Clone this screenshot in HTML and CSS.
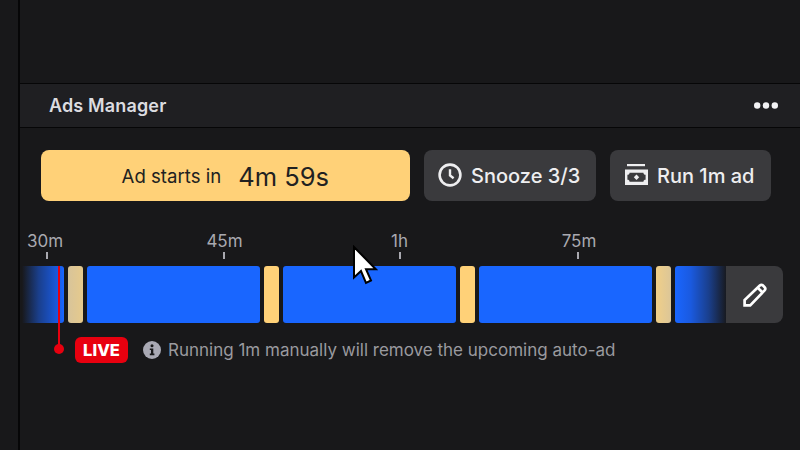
FILE: index.html
```html
<!DOCTYPE html>
<html lang="en">
<head>
<meta charset="utf-8">
<title>Ads Manager</title>
<link rel="stylesheet" href="styles.css">
</head>
<body>
<div class="app">
  <aside class="rail"></aside>
  <main class="main">
    <div class="top"></div>
    <header class="head">
      <h1 class="title">Ads Manager</h1>
      <svg class="more" width="24" height="7" viewBox="0 0 24 7"><circle cx="3.2" cy="3.5" r="3.2"/><circle cx="12" cy="3.5" r="3.2"/><circle cx="20.8" cy="3.5" r="3.2"/></svg>
    </header>
    <section class="panel">
      <div class="actions">
        <div class="countdown"><span class="cd-label">Ad starts in</span><span class="cd-time">4m 59s</span></div>
        <button class="btn btn-snooze">
          <svg width="24" height="24" viewBox="0 0 24 24" fill="none" stroke="currentColor"><circle cx="12" cy="12" r="10.4" stroke-width="2.6"/><path d="M12 6.2V12.4L15.6 15.2" stroke-width="2.4"/></svg>
          <span>Snooze 3/3</span>
        </button>
        <button class="btn btn-run">
          <svg width="24" height="22" viewBox="0 0 24 22"><path fill="currentColor" d="M3 0H21V2.2H3Z"/><path fill="currentColor" fill-rule="evenodd" d="M1 5.5H24V21H1ZM3.4 10.8V15.8C4.8 15.8 5.4 16.4 5.6 17.8H19.4C19.6 16.4 20.2 15.8 21.6 15.8V10.8C20.2 10.8 19.6 10.2 19.4 8.8H5.6C5.4 10.2 4.8 10.8 3.4 10.8Z"/><path fill="currentColor" d="M12.5 10.6L15.2 13.3L12.5 16L9.8 13.3Z"/></svg>
          <span>Run 1m ad</span>
        </button>
      </div>
      <div class="timeline">
        <div class="scale">
          <div class="mark mark-a"><span>30m</span><i></i></div>
          <div class="mark mark-b"><span>45m</span><i></i></div>
          <div class="mark mark-c"><span>1h</span><i></i></div>
          <div class="mark mark-d"><span>75m</span><i></i></div>
        </div>
        <div class="track">
          <div class="seg blue fade-l"></div>
          <div class="seg gold dim-l"></div>
          <div class="seg blue wide"></div>
          <div class="seg gold"></div>
          <div class="seg blue wide"></div>
          <div class="seg gold"></div>
          <div class="seg blue wide"></div>
          <div class="seg gold dim-r"></div>
          <div class="seg blue fade-r"></div>
          <button class="edit">
            <svg width="24" height="24" viewBox="0 0 24 24" fill="none" stroke="#fff" stroke-width="2.7" stroke-linejoin="miter"><path d="M1.6 22.4V17L16.8 2.6C17.8 1.7 19 1.7 20 2.6L21.6 4.2C22.5 5.2 22.5 6.4 21.6 7.4L7.2 22.4Z"/><path d="M15 5L19.3 9.2"/></svg>
          </button>
        </div>
        <div class="status">
          <span class="live">LIVE</span>
          <svg class="info" width="18" height="18" viewBox="0 0 18 18"><circle cx="9" cy="9" r="9" fill="#a9a9b4"/><circle cx="9" cy="4.8" r="1.5" fill="#18181a"/><path d="M6.8 7.4H10.3V12.6H11.4V14.2H6.8V12.6H8V9H6.8Z" fill="#18181a"/></svg>
          <span class="note">Running 1m manually will remove the upcoming auto-ad</span>
        </div>
        <div class="playhead"></div>
      </div>
    </section>
    <svg class="cursor" width="26" height="42" viewBox="0 0 26 42"><path d="M2 2V32.5L9 26L14 37.8L19 35.4L14 24.2H23.8Z" fill="#fff" stroke="#000" stroke-width="2"/></svg>
  </main>
</div>
</body>
</html>
```
FILE: styles.css
```css
* { box-sizing: border-box; }
html, body { margin: 0; height: 100%; overflow: hidden; }
body { background: #18181a; font-family: Inter, "Liberation Sans", sans-serif; color: #e8e8ea; }
.app { display: flex; height: 450px; }
.rail { width: 20px; flex: none; border-right: 2px solid #060607; background: #18181a; }
.main { position: relative; flex: 1; display: flex; flex-direction: column; }
.top { height: 83px; flex: none; }
.head { height: 45px; flex: none; display: flex; align-items: center; justify-content: space-between; padding: 0 22px 0 29px; background: #1f1f22; border-top: 1px solid #060607; border-bottom: 1px solid #060607; }
.title { margin: 0 0 1px; font-size: 18px; font-weight: 600; letter-spacing: .15px; color: #dcdce0; }
.more { fill: #f2f2f4; display: block; }
.panel { padding: 21.5px 17px 0 2px; display: flex; flex-direction: column; }
.actions { display: flex; gap: 14px; padding-left: 19px; height: 51.5px; }
.countdown { width: 368.5px; padding-top: 2px; border-radius: 8px; background: #ffd178; color: #212121; display: flex; align-items: center; justify-content: center; gap: 17px; }
.cd-label { font-size: 18.6px; }
.cd-time { font-size: 25.5px; }
.btn { height: 51.5px; border: 0; border-radius: 8px; background: #3a3a3d; color: #eeeef0; font: 500 20px Inter, "Liberation Sans", sans-serif; display: flex; align-items: center; gap: 9px; padding: 0; }
.btn span { padding-top: 2px; }
.btn-snooze { width: 172.5px; padding-left: 14.5px; }
.btn-run { width: 161px; padding-left: 14px; }
.timeline { position: relative; margin-top: 31px; }
.scale { position: relative; height: 34px; }
.mark { position: absolute; top: 0; width: 60px; display: flex; flex-direction: column; align-items: center; font-size: 17px; color: #a9a9b0; line-height: 18px; }
.mark i { width: 1.5px; height: 7px; background: #a9a9b0; margin-top: 2px; }
.mark-a { left: -7px; }
.mark-b { left: 172.5px; }
.mark-c { left: 347.5px; }
.mark-d { left: 527px; }
.mark-a i { margin-left: 4px; }
.mark-b i { margin-left: -1px; }
.mark-c i { margin-left: 1px; }
.mark-d i { margin-left: -2px; }
.track { display: flex; gap: 4px; height: 57px; margin-left: -0.5px; }
.seg { border-radius: 3px; flex: none; }
.blue { background: #1966ff; }
.gold { background: #ffd178; width: 15px; }
.dim-l { background: linear-gradient(90deg, #d8c49a, #e6ca8c); }
.dim-r { background: linear-gradient(90deg, #f0cf88, #dcc698); }
.wide { width: 173px; }
.fade-l { width: 42px; border-radius: 0 3px 3px 0; background: linear-gradient(90deg, #18181a 0%, #1a3f8c 40%, #1a5ae0 85%, #1966ff 100%); }
.fade-r { width: 52.5px; margin-right: -5px; border-radius: 3px 0 0 3px; background: linear-gradient(90deg, #1966ff 0%, #1a5ae0 30%, #1a3f8c 65%, #18181a 100%); }
.edit { width: 57px; height: 57px; flex: none; border: 0; padding: 0; background: #3a3a3d; border-radius: 0 8px 8px 0; display: flex; align-items: center; justify-content: center; position: relative; }
.status { display: flex; align-items: center; margin-top: 14px; padding-left: 53px; height: 26px; }
.live { width: 53px; height: 26px; border-radius: 6px; background: #e8000f; color: #fff; font-size: 16.5px; font-weight: 800; display: flex; align-items: center; justify-content: center; }
.info { margin-left: 15px; flex: none; }
.note { margin-left: 7px; font-size: 17px; color: #9a9a9f; white-space: nowrap; }
.playhead { position: absolute; left: 36px; top: 34px; width: 2px; height: 83px; background: #e8000f; }
.playhead::after { content: ""; position: absolute; left: -4px; bottom: -5px; width: 10px; height: 10px; border-radius: 50%; background: #e8000f; }
.cursor { position: absolute; left: 332px; top: 244.5px; }
```
